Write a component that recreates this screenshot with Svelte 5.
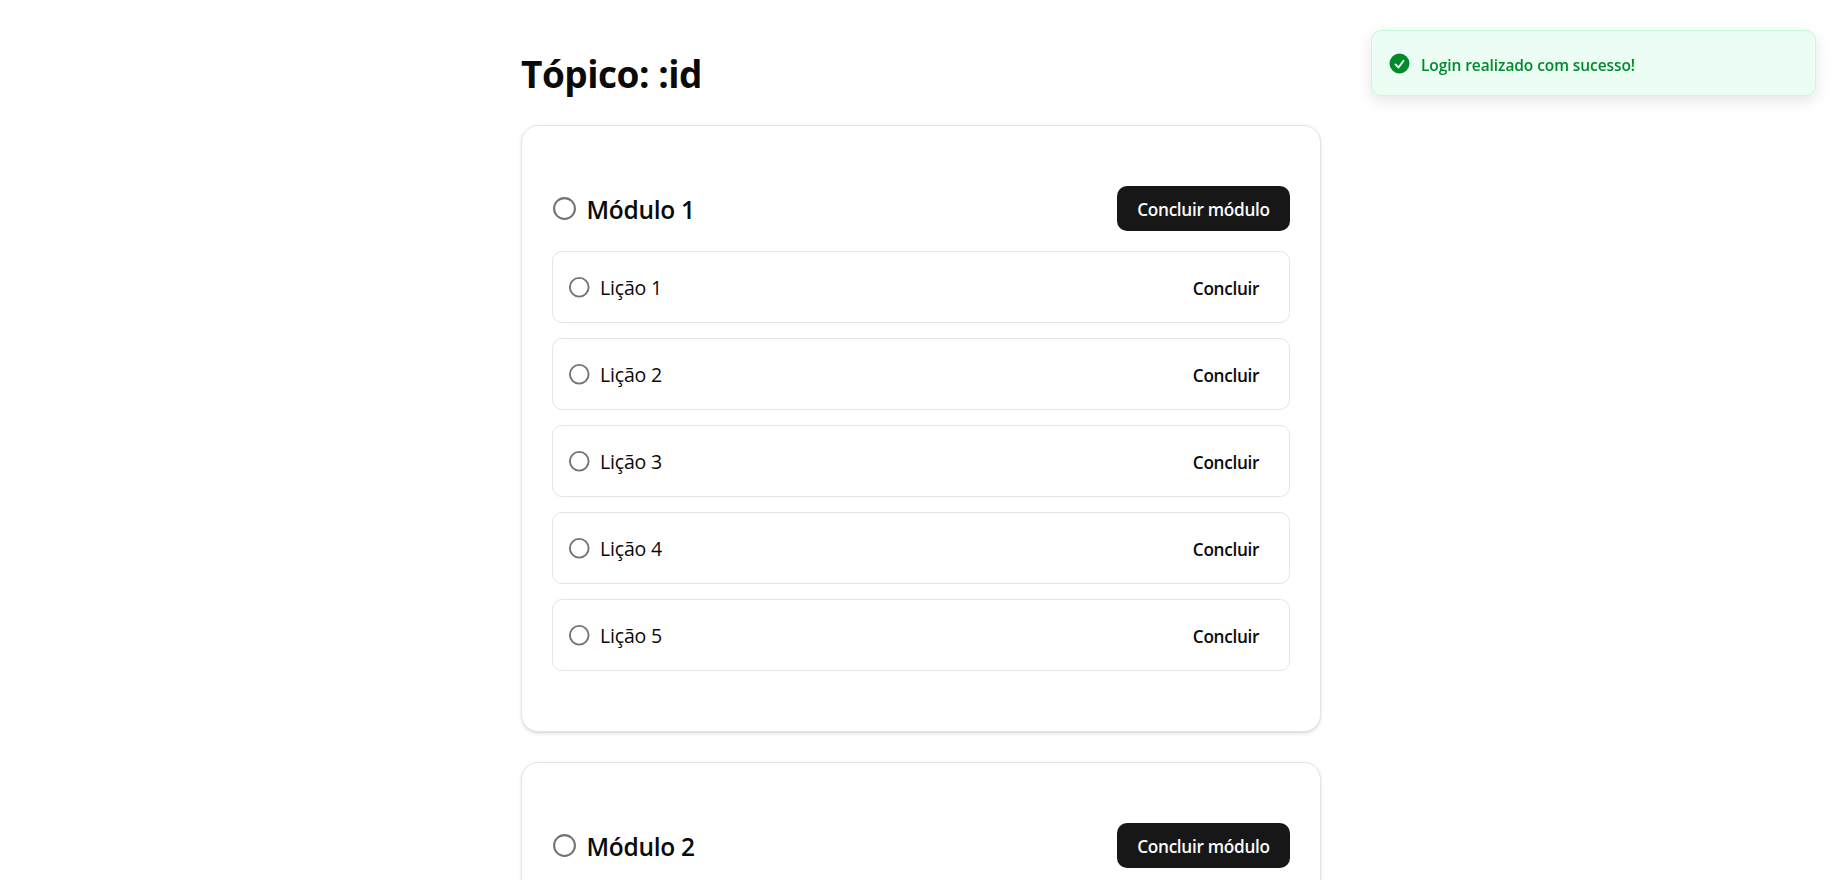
<script>
  const modules = [
    { id: 1, lessons: [1, 2, 3, 4, 5] },
    { id: 2, lessons: [] },
  ];
</script>

<main>
  <h1><span>Tópico: :id</span></h1>
  {#each modules as m}
    <section class="card">
      <header>
        <div class="name">
          <svg width="25" height="25" viewBox="0 0 24 24"><circle cx="12" cy="12" r="10" /></svg>
          <h2>Módulo {m.id}</h2>
        </div>
        <button class="primary"><span>Concluir módulo</span></button>
      </header>
      <ul>
        {#each m.lessons as l}
          <li>
            <div class="name">
              <svg width="22.5" height="22.5" viewBox="0 0 24 24"><circle cx="12" cy="12" r="10" /></svg>
              <span class="lesson">Lição {l}</span>
            </div>
            <button class="ghost"><span>Concluir</span></button>
          </li>
        {/each}
      </ul>
    </section>
  {/each}
</main>

<div class="toast" role="status">
  <svg class="check" width="25" height="25" viewBox="0 0 20 20">
    <path
      fill-rule="evenodd"
      d="M10 18a8 8 0 100-16 8 8 0 000 16zm3.857-9.809a.75.75 0 00-1.214-.882l-3.483 4.79-1.88-1.88a.75.75 0 10-1.06 1.061l2.5 2.5a.75.75 0 001.137-.089l4-5.5z"
      clip-rule="evenodd"
    />
  </svg>
  <span>Login realizado com sucesso!</span>
</div>

<style>
  :global(body) {
    margin: 0;
    background: #fff;
    overflow: hidden;
  }
  main {
    box-sizing: border-box;
    width: 820px;
    height: 880px;
    margin-left: 511px;
    padding: 50px 10px 0;
    display: flex;
    flex-direction: column;
    gap: 30px;
    overflow: hidden;
    color: #0a0a0a;
    font-family: "Open Sans", "Noto Sans", sans-serif;
  }
  h1 {
    flex: none;
    margin: 0;
    height: 45px;
    line-height: 48px;
    font-size: 37px;
    font-weight: 700;
    letter-spacing: -0.5px;
    white-space: nowrap;
  }
  .card {
    flex: none;
    box-sizing: border-box;
    height: 607px;
    padding: 60px 30px;
    border: 1px solid #e5e5e5;
    border-radius: 17.5px;
    box-shadow: 0 1.25px 3.75px rgba(0, 0, 0, 0.1), 0 1.25px 2.5px -1.25px rgba(0, 0, 0, 0.1);
    background: #fff;
  }
  header {
    display: flex;
    justify-content: space-between;
    align-items: center;
    height: 45px;
  }
  .name {
    display: flex;
    align-items: center;
    gap: 9.6px;
  }
  .name svg {
    fill: none;
    stroke: #737373;
    stroke-width: 2;
  }
  h2 {
    margin: 0;
    line-height: 35px;
    font-size: 24.5px;
    font-weight: 600;
    letter-spacing: -0.3px;
    padding-top: 2px;
  }
  button {
    height: 45px;
    border: 0;
    border-radius: 10px;
    padding: 1px 0 0;
    font: 600 17.2px/25px "Open Sans", "Noto Sans", sans-serif;
    letter-spacing: -0.3px;
    white-space: nowrap;
  }
  .primary {
    width: 173px;
    background: #171717;
    color: #fafafa;
  }
  .ghost {
    height: 40px;
    width: 96px;
    padding-top: 3px;
    background: transparent;
    color: #0a0a0a;
  }
  ul {
    list-style: none;
    margin: 20px 0 0;
    padding: 0;
    display: flex;
    flex-direction: column;
    gap: 15px;
  }
  li {
    box-sizing: border-box;
    height: 72px;
    padding: 0 15px;
    display: flex;
    align-items: center;
    justify-content: space-between;
    border: 1px solid #e5e5e5;
    border-radius: 10px;
  }
  .lesson {
    font-size: 19.5px;
    line-height: 30px;
    letter-spacing: -0.2px;
    padding-top: 1px;
  }
  .toast {
    position: fixed;
    top: 30px;
    left: 1371px;
    width: 445px;
    height: 66px;
    box-sizing: border-box;
    padding: 0 15px;
    display: flex;
    align-items: center;
    gap: 9px;
    border: 1px solid #bffcd9;
    border-radius: 10px;
    background: #ecfdf3;
    color: #008a2e;
    box-shadow: 0 5px 15px rgba(0, 0, 0, 0.1);
    font: 600 15.5px/24px "Open Sans", "Noto Sans", sans-serif;
    letter-spacing: -0.08px;
    white-space: nowrap;
  }
  .toast span {
    padding-top: 3px;
  }
  .check {
    fill: #008a2e;
  }
</style>
